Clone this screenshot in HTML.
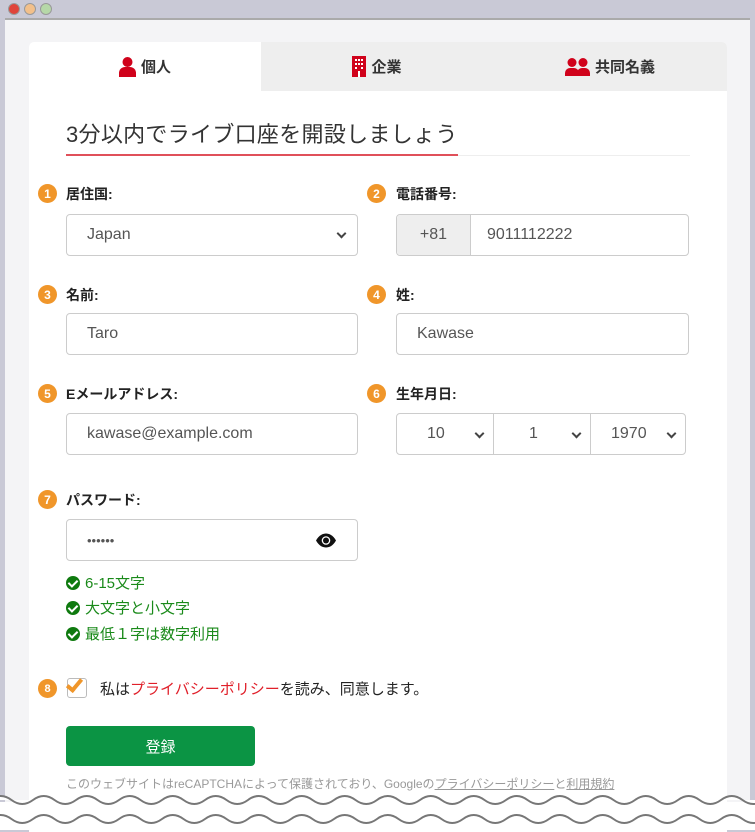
<!DOCTYPE html>
<html><head><meta charset="utf-8"><style>
*{box-sizing:border-box;margin:0;padding:0}
body{width:755px;height:830px;overflow:hidden;background:#c9c9d6;font-family:"Liberation Sans","Noto Sans CJK JP",sans-serif;position:relative;color:#222}
.a{position:absolute}
.win{left:5px;top:18px;width:745px;height:812px;background:#f4f4f6;border-top:2px solid #aaa}
.card{left:29px;top:42px;width:698px;height:790px;background:#fff;border-radius:5px 5px 0 0}
.dot{width:12px;height:12px;border-radius:50%;top:3px;border:1px solid #999}
.tab{top:42px;height:49px;display:flex;align-items:center;justify-content:center;font-weight:bold;font-size:15px;color:#333;gap:5px}
.badge{width:19px;height:19px;border-radius:50%;background:#f0962a;color:#fff;font-size:12px;font-weight:bold;display:flex;align-items:center;justify-content:center}
.lbl{font-weight:bold;font-size:14px;color:#222}
.in{border:1px solid #ccc;border-radius:4px;background:#fff;height:42px;display:flex;align-items:center;padding-left:20px;font-size:16px;color:#555}
.chev{position:absolute;right:10px;top:16px;width:7px;height:7px;border-right:2px solid #444;border-bottom:2px solid #444;transform:rotate(45deg)}
.ck{font-size:15px;color:#1a8a1a;display:flex;align-items:center;gap:5px}
.ck i{width:14px;height:14px;border-radius:50%;background:#0f7a0f;display:inline-block;position:relative}
.ck i:after{content:"";position:absolute;left:4px;top:2px;width:4px;height:7px;border-right:2px solid #fff;border-bottom:2px solid #fff;transform:rotate(45deg)}
</style></head><body>
<div class="a dot" style="left:8px;background:#e0443a"></div>
<div class="a dot" style="left:24px;background:#f3c08a"></div>
<div class="a dot" style="left:40px;background:#b6d8a8"></div>
<div class="a win"></div>
<div class="a card"></div>
<div class="a" style="left:261px;top:42px;width:466px;height:49px;background:#eee;border-radius:0 5px 0 0"></div>
<div class="a tab" style="left:29px;width:232px"><svg width="17" height="20" viewBox="0 0 17 20"><circle cx="8.5" cy="5" r="5" fill="#d0021b"/><path d="M0 20v-4a6 6 0 0 1 6-6h5a6 6 0 0 1 6 6v4z" fill="#d0021b"/></svg>個人</div>
<div class="a tab" style="left:261px;width:232px"><svg width="14" height="21" viewBox="0 0 14 21"><rect width="14" height="21" fill="#d0021b"/><g fill="#fff"><rect x="3" y="3" width="2" height="2"/><rect x="6" y="3" width="2" height="2"/><rect x="9" y="3" width="2" height="2"/><rect x="3" y="7" width="2" height="2"/><rect x="6" y="7" width="2" height="2"/><rect x="9" y="7" width="2" height="2"/><rect x="3" y="11" width="2" height="2"/><rect x="9" y="11" width="2" height="2"/><rect x="6" y="15" width="2" height="6"/></g></svg>企業</div>
<div class="a tab" style="left:493px;width:234px"><svg width="25" height="18" viewBox="0 0 25 18"><circle cx="7" cy="4.5" r="4.5" fill="#d0021b"/><circle cx="18" cy="4.5" r="4.5" fill="#d0021b"/><path d="M0 18v-3a5 5 0 0 1 5-5h4a5 5 0 0 1 5 5v3zM12 18v-3a5 5 0 0 1 5-5h3a5 5 0 0 1 5 5v3z" fill="#d0021b"/></svg>共同名義</div>
<div class="a" style="left:66px;top:117px;font-size:22px;color:#333;letter-spacing:0.3px">3分以内でライブ口座を開設しましょう</div>
<div class="a" style="left:66px;top:155px;width:624px;height:1px;background:#eee"></div>
<div class="a" style="left:66px;top:154px;width:392px;height:2px;background:#e0505a"></div>

<div class="a badge" style="left:38px;top:184px">1</div><div class="a lbl" style="left:66px;top:184px">居住国:</div>
<div class="a badge" style="left:367px;top:184px">2</div><div class="a lbl" style="left:396px;top:184px">電話番号:</div>
<div class="a in" style="left:66px;top:214px;width:292px">Japan<span class="chev" style="top:15px;right:12px"></span></div>
<div class="a in" style="left:396px;top:214px;width:293px;padding:0">
<div style="width:74px;height:40px;background:#eee;border-right:1px solid #ccc;display:flex;align-items:center;justify-content:center;border-radius:4px 0 0 4px">+81</div><span style="margin-left:16px">9011112222</span></div>

<div class="a badge" style="left:38px;top:285px">3</div><div class="a lbl" style="left:66px;top:285px">名前:</div>
<div class="a badge" style="left:367px;top:285px">4</div><div class="a lbl" style="left:396px;top:285px">姓:</div>
<div class="a in" style="left:66px;top:313px;width:292px">Taro</div>
<div class="a in" style="left:396px;top:313px;width:293px">Kawase</div>

<div class="a badge" style="left:38px;top:384px">5</div><div class="a lbl" style="left:66px;top:384px">Eメールアドレス:</div>
<div class="a badge" style="left:367px;top:384px">6</div><div class="a lbl" style="left:396px;top:384px">生年月日:</div>
<div class="a in" style="left:66px;top:413px;width:292px">kawase@example.com</div>
<div class="a in" style="left:396px;top:413px;width:98px;border-radius:4px 0 0 4px;padding-left:30px">10<span class="chev"></span></div>
<div class="a in" style="left:493px;top:413px;width:98px;border-radius:0;padding-left:35px">1<span class="chev"></span></div>
<div class="a in" style="left:590px;top:413px;width:96px;border-radius:0 4px 4px 0;padding-left:20px">1970<span class="chev"></span></div>

<div class="a badge" style="left:38px;top:490px">7</div><div class="a lbl" style="left:66px;top:490px">パスワード:</div>
<div class="a in" style="left:66px;top:519px;width:292px;font-size:13px">••••••
<svg class="a" style="right:20px;top:13px" width="22" height="15" viewBox="0 0 22 15"><path d="M1 7.5C4 2 8 0.5 11 0.5S18 2 21 7.5C18 13 14 14.5 11 14.5S4 13 1 7.5z" fill="#111"/><circle cx="11" cy="7.5" r="4.3" fill="#fff"/><circle cx="11" cy="7.5" r="3" fill="#111"/></svg></div>

<div class="a ck" style="left:66px;top:572px"><i></i>6-15文字</div>
<div class="a ck" style="left:66px;top:597px"><i></i>大文字と小文字</div>
<div class="a ck" style="left:66px;top:623px"><i></i>最低１字は数字利用</div>

<div class="a badge" style="left:38px;top:679px;font-size:11px">8</div>
<div class="a" style="left:67px;top:678px;width:20px;height:20px;border:1px solid #bbb;border-radius:3px;background:#fff"></div>
<div class="a" style="left:70px;top:676px;width:9px;height:16px;border-right:4px solid #f0962a;border-bottom:4px solid #f0962a;transform:rotate(40deg)"></div>
<div class="a" style="left:100px;top:678px;font-size:15px;color:#222">私は<span style="color:#e0202a">プライバシーポリシー</span>を読み、同意します。</div>

<div class="a" style="left:66px;top:726px;width:189px;height:40px;background:#0b9444;border-radius:4px;color:#fff;font-size:15px;display:flex;align-items:center;justify-content:center">登録</div>
<div class="a" style="left:66px;top:775px;font-size:12px;color:#999;white-space:nowrap">このウェブサイトはreCAPTCHAによって保護されており、Googleの<u>プライバシーポリシー</u>と<u>利用規約</u></div>

<svg class="a" style="left:0;top:788px" width="755" height="42" viewBox="0 0 755 42">
<defs><path id="wv" d="M-10 12 q10.75 -8 21.5 0 q10.75 8 21.5 0 q10.75 -8 21.5 0 q10.75 8 21.5 0 q10.75 -8 21.5 0 q10.75 8 21.5 0 q10.75 -8 21.5 0 q10.75 8 21.5 0 q10.75 -8 21.5 0 q10.75 8 21.5 0 q10.75 -8 21.5 0 q10.75 8 21.5 0 q10.75 -8 21.5 0 q10.75 8 21.5 0 q10.75 -8 21.5 0 q10.75 8 21.5 0 q10.75 -8 21.5 0 q10.75 8 21.5 0 q10.75 -8 21.5 0 q10.75 8 21.5 0 q10.75 -8 21.5 0 q10.75 8 21.5 0 q10.75 -8 21.5 0 q10.75 8 21.5 0 q10.75 -8 21.5 0 q10.75 8 21.5 0 q10.75 -8 21.5 0 q10.75 8 21.5 0 q10.75 -8 21.5 0 q10.75 8 21.5 0 q10.75 -8 21.5 0 q10.75 8 21.5 0 q10.75 -8 21.5 0 q10.75 8 21.5 0 q10.75 -8 21.5 0 q10.75 8 21.5 0 q10.75 -8 21.5 0 q10.75 8 21.5 0"/></defs>
<rect x="0" y="14" width="755" height="28" fill="#fff"/>
<use href="#wv" fill="#fff" stroke="none"/>
<use href="#wv" fill="none" stroke="#777" stroke-width="2"/>
<use href="#wv" y="19" fill="none" stroke="#777" stroke-width="2"/>
</svg>
</body></html>
